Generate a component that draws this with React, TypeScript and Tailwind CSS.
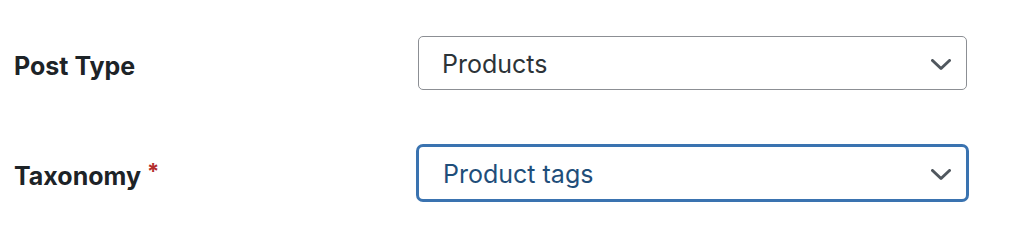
function Chevron() {
  return (
    <svg width="20" height="12" viewBox="0 0 20 12" fill="none" className="mt-[3px] text-[#50575e]">
      <path d="M1.5 1.5 L10 9.5 L18.5 1.5" stroke="currentColor" strokeWidth="3" strokeLinecap="round" strokeLinejoin="round" />
    </svg>
  );
}

function Row({ label, value, required, focused }: { label: string; value: string; required?: boolean; focused?: boolean }) {
  return (
    <div className="flex items-center">
      <div className={`${focused ? "w-[402px]" : "w-[404px]"} mt-[7px] text-[25px] font-bold leading-none text-[#1d2327]`}>
        {label}
        {required && <span className="relative -top-[6px] ml-[6px] text-[22px] text-[#b32d2e]">*</span>}
      </div>
      <div
        className={
          focused
            ? "flex h-[58px] w-[553px] items-center justify-between rounded-[7px] border-[3px] border-[#3a73b0] pl-[24px] pr-[15px] text-[25px] text-[#1f4e7a]"
            : "flex h-[54px] w-[549px] items-center justify-between rounded-[5px] border border-[#8c8f94] pl-[23px] pr-[15px] text-[25px] text-[#2c3338]"
        }
      >
        <span className="mt-[3px]">{value}</span>
        <Chevron />
      </div>
    </div>
  );
}

export default function App() {
  return (
    <div className="flex h-[244px] w-[1024px] flex-col gap-[54px] bg-white pl-[14px] pt-[36px] font-['Inter',sans-serif]">
      <Row label="Post Type" value="Products" />
      <Row label="Taxonomy" value="Product tags" required focused />
    </div>
  );
}
